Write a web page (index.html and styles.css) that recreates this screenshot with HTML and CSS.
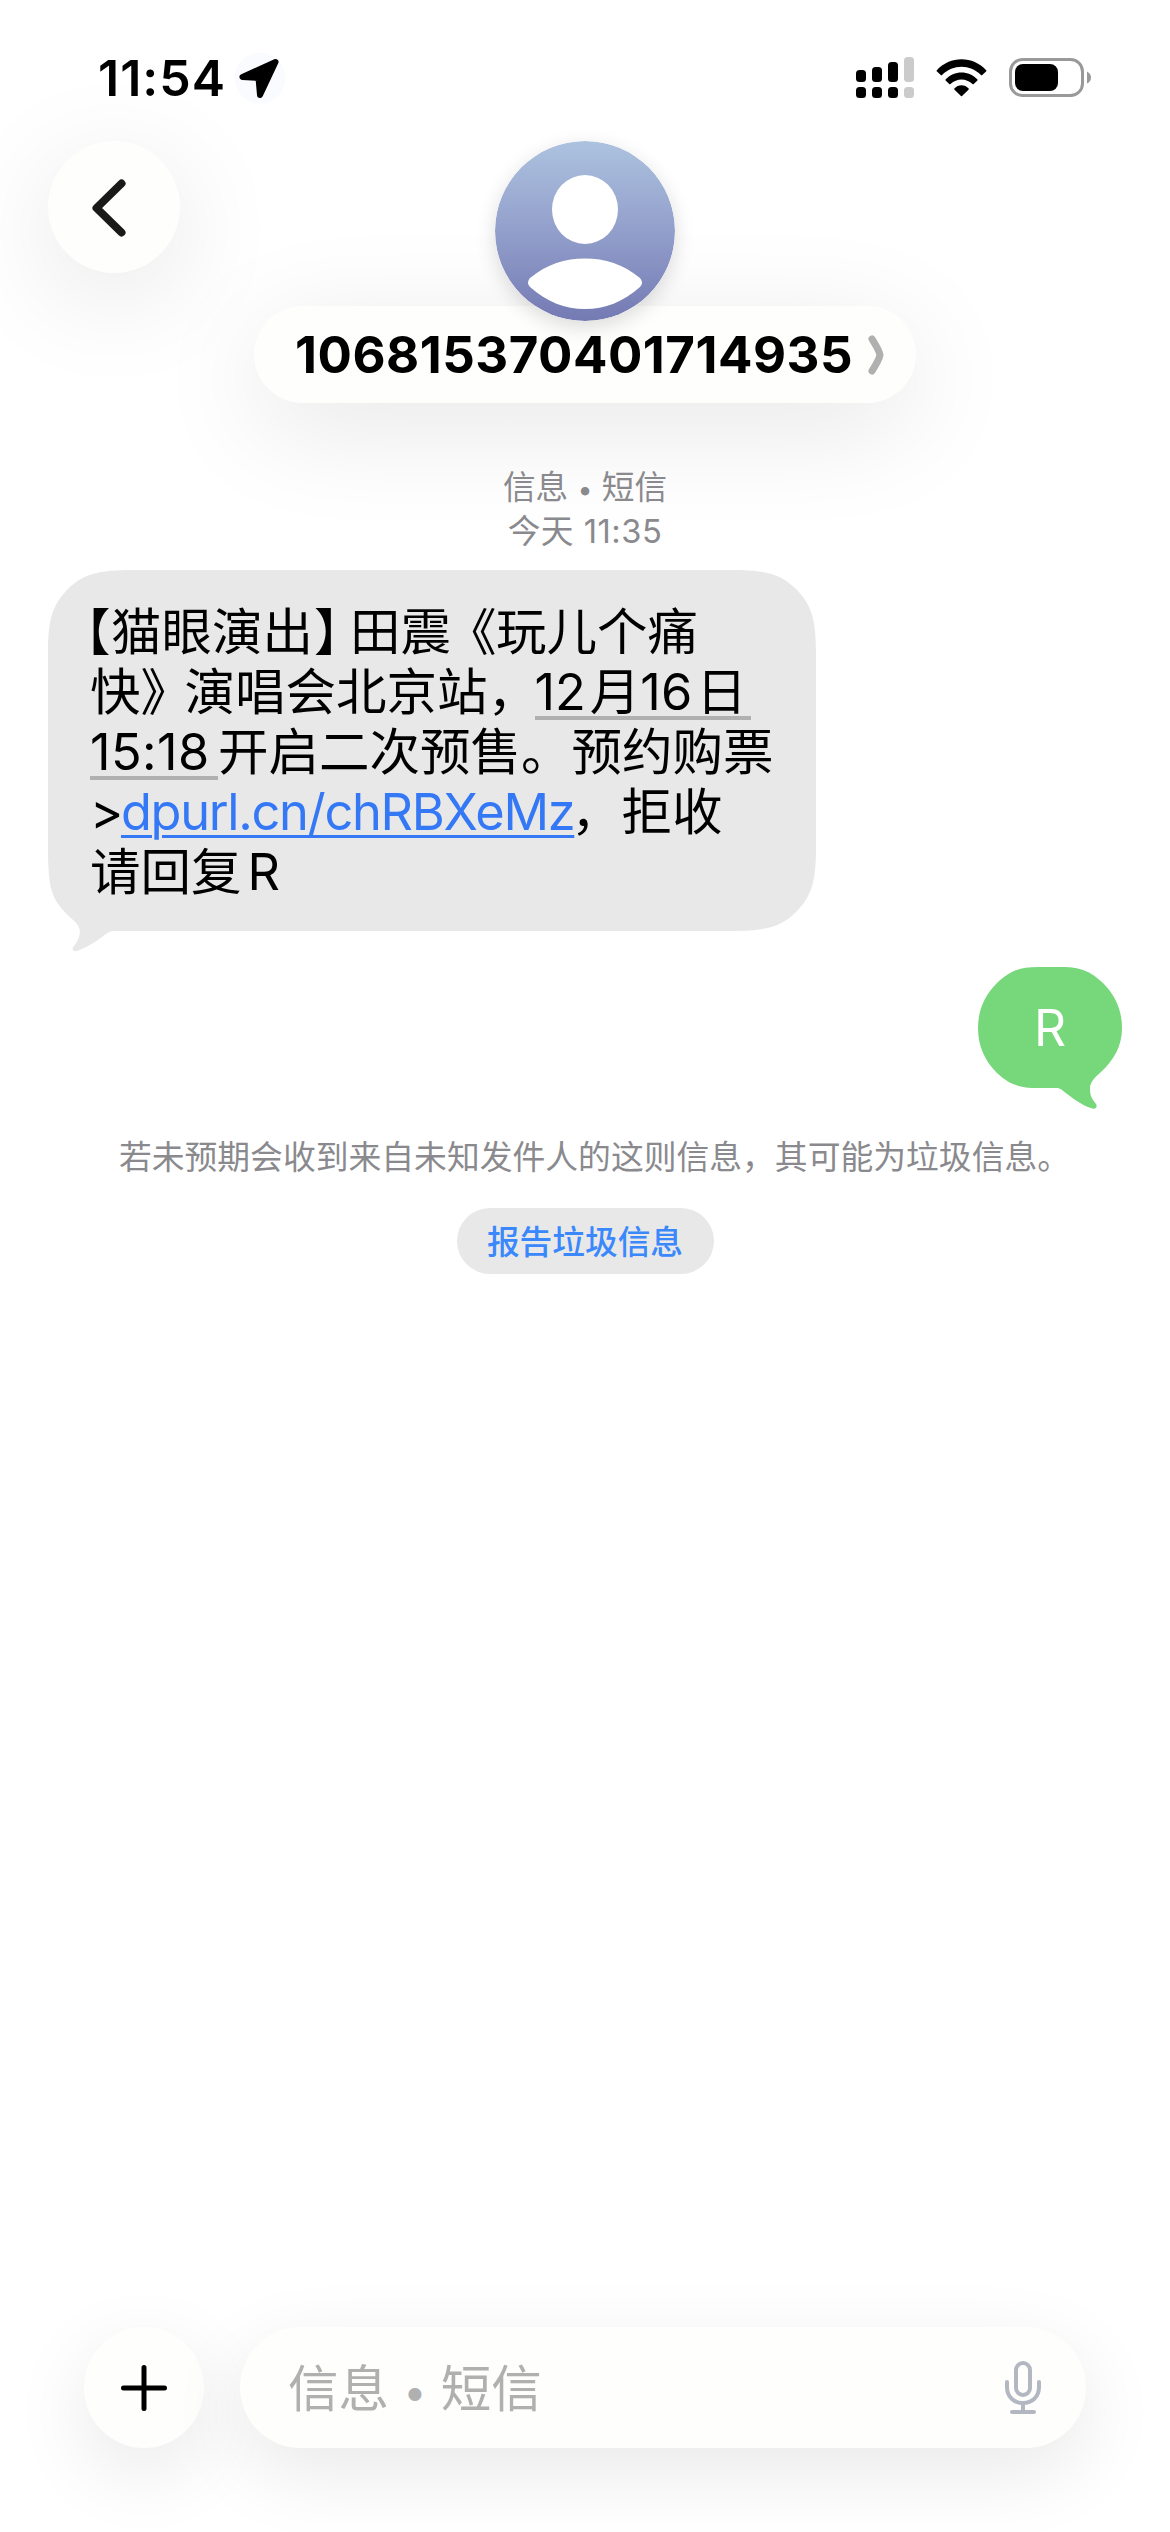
FILE: index.html
```html
<!DOCTYPE html>
<html lang="zh-CN">
<head>
<meta charset="utf-8">
<title>信息</title>
<link rel="stylesheet" href="styles.css">
</head>
<body>
<div class="phone">
  <header class="status">
    <div class="status-left">
      <span class="time">11:54</span>
      <svg class="location" width="52" height="52" viewBox="0 0 52 52"><circle cx="26" cy="26" r="25.500" fill="#fafbff"/><path d="M41.500 10 L8.500 25 L24.500 26 L26 43 Z" fill="#000" stroke="#000" stroke-width="6" stroke-linejoin="round"/></svg>
    </div>
    <div class="status-right">
      <svg width="59" height="42" viewBox="0 0 59 42">
        <g fill="#000"><rect y="13" width="10" height="12" rx="3.500"/><rect x="16" y="10" width="10" height="15" rx="3.500"/><rect x="32" y="5" width="10" height="20" rx="3.500"/><rect y="30" width="10" height="11" rx="3.500"/><rect x="16" y="30" width="10" height="11" rx="3.500"/><rect x="32" y="30" width="10" height="11" rx="3.500"/></g>
        <g fill="#cbcbcb"><rect x="48" width="10" height="25" rx="3.500"/><rect x="48" y="30" width="10" height="11" rx="3.500"/></g>
      </svg>
      <svg class="wifi" width="51" height="38" viewBox="0 0 51 38">
        <path d="M0.600 11.500 C14 -3.500 37 -3.500 50.400 11.500 Q50.600 12 50 12.600 L46 16.300 Q45.500 16.600 45 16 C34 5 17 5 6 16 Q5.500 16.600 5 16.300 L1 12.600 Q.4 12 .6 11.500Z"/>
        <path d="M9.500 20.600 C18 11 33 11 41.500 20.600 Q41.700 21 41.400 21.500 L37.500 25.200 Q37 25.500 36.500 25 C30 19 21 19 14.500 25 Q14 25.500 13.500 25.200 L9.600 21.500 Q9.300 21 9.500 20.600Z"/>
        <path d="M18.300 29.500 C22 25 29 25 32.700 29.500 Q33 30 32.500 30.700 L26 37 Q25.500 37.500 25 37 L18.500 30.700 Q18 30 18.300 29.500Z"/>
      </svg>
      <svg width="84" height="40" viewBox="0 0 84 40"><rect x="1.500" y="1.500" width="72" height="36" rx="12" fill="none" stroke="#999" stroke-width="3"/><rect x="6" y="6" width="43" height="27" rx="8" fill="#000"/><path d="M78 13.500 Q82 15.500 82 19.500 Q82 23.500 78 25.500Z" fill="#999"/></svg>
    </div>
  </header>

  <nav class="nav">
    <button class="back" aria-label="返回"><svg width="34" height="58" viewBox="0 0 34 58"><path d="M29.500 4.500 L4.500 29 L29.500 53.500" fill="none" stroke="#1a1a1a" stroke-width="8" stroke-linecap="round" stroke-linejoin="round"/></svg></button>
    <div class="contact">
      <svg class="avatar" width="180" height="180" viewBox="0 0 180 180">
        <defs><linearGradient id="av" x1="0" y1="0" x2="0" y2="1"><stop offset="0" stop-color="#adc2df"/><stop offset=".5" stop-color="#929fcb"/><stop offset="1" stop-color="#747ab3"/></linearGradient></defs>
        <circle cx="90" cy="90" r="90" fill="url(#av)"/>
        <ellipse cx="90" cy="68.500" rx="33" ry="34.500" fill="#fff"/>
        <path d="M35 137 C52 123 70 117.500 90 117.500 C110 117.500 128 123 145 137 Q149 141.500 145 146 C128 161 110 168 90 168 C70 168 52 161 35 146 Q31 141.500 35 137Z" fill="#fff"/>
      </svg>
      <div class="name"><span class="number">106815370401714935</span><svg width="16" height="40" viewBox="0 0 16 40"><path d="M4 4 Q11 15 12 20 Q11 25 4 36" fill="none" stroke="#b0b0b0" stroke-width="7" stroke-linecap="round" stroke-linejoin="round"/></svg></div>
    </div>
  </nav>

  <main class="thread">
    <div class="stamp"><div>信息 <span class="bullet">•</span> 短信</div><div class="when">今天 11:35</div></div>

    <div class="incoming">
      <svg class="shape" width="768" height="382" viewBox="0 0 768 382"><path fill="#e8e8e8" d="M85 0 H683 C718 0 733 4 748 19 C764 35 768 50 768 84 V277 C768 311 764 326 748 342 C733 357 718 361 683 361 H66 C61 361 58 364 54 367 C47 372 38 378 29 381 C25 382 23 379 26 376 C32 368 34 361 29 354 C25 349 21 347 15 340 C3 327 0 315 0 277 V84 C0 50 4 35 20 19 C35 4 50 0 85 0Z"/></svg>
      <div class="line"><span class="open">【</span><span class="w4">猫眼演出</span><span class="close-lent">】</span>田震<span class="open-book">《</span>玩儿个痛</div>
      <div class="line">快<span class="close-book">》</span>演唱会北京站<span class="comma">，</span><span class="date date-day">12<span class="month">月</span>16<span class="day">日</span></span></div>
      <div class="line"><span class="date date-time">15:18</span>开启二次预售。预约购票</div>
      <div class="line"><span class="gt">&gt;</span><a class="link">dpurl.cn/chRBXeMz</a>，拒收</div>
      <div class="line">请回复<span class="r">R</span></div>
    </div>

    <div class="outgoing">
      <svg class="shape" width="144" height="143" viewBox="0 0 144 143"><path fill="#76d87a" d="M60 0 H84 C104 0 113 5 125 16 C138 29 144 44 144 61 C144 79 136 93 123 105 C116 111 112 115 112 122 C112 130 115 133 118 137 C120 140 117 143 113 141 C103 138 93 130 84 123 C82 121.500 81 121 77 121 H60 C40 121 31 117 19 106 C6 93 0 78 0 61 C0 44 6 29 19 16 C31 5 40 0 60 0Z"/></svg>
      <span>R</span>
    </div>

    <p class="notice">若未预期会收到来自未知发件人的这则信息，其可能为垃圾信息。</p>
    <button class="report">报告垃圾信息</button>
  </main>

  <footer class="composer">
    <button class="plus" aria-label="添加"><svg width="46" height="46" viewBox="0 0 46 46"><path d="M23 2.500V43.500M2.500 23H43.500" stroke="#000" stroke-width="5" stroke-linecap="round"/></svg></button>
    <div class="field"><span class="placeholder">信息 <span class="bullet">•</span> 短信</span>
      <svg width="36" height="54" viewBox="0 0 36 54" fill="none" stroke="#b3b7c1" stroke-width="4" stroke-linecap="round"><rect x="11" y="2" width="14" height="32" rx="7"/><path d="M2 21V26C2 36 9 42 18 42C27 42 34 36 34 26V21M18 42V51M7 51H29"/></svg>
    </div>
  </footer>
</div>
</body>
</html>
```
FILE: styles.css
```css
* { box-sizing: border-box; }
body { margin: 0; background: #fff; }
button { border: 0; padding: 0; margin: 0; font: inherit; }
svg { display: block; flex: none; }

.phone {
  width: 1170px;
  height: 2532px;
  display: flex;
  flex-direction: column;
  overflow: hidden;
  background: #fff;
  color: #000;
  font-family: Inter, "Noto Sans CJK SC", sans-serif;
  text-spacing-trim: space-all;
}

.status {
  height: 141px;
  padding: 52px 77px 0 98px;
  display: flex;
  justify-content: space-between;
  align-items: flex-start;
}
.status-left { display: flex; align-items: center; gap: 11px; }
.time { width: 125px; font-size: 50px; line-height: 52px; font-weight: 600; letter-spacing: 1px; white-space: nowrap; }
.status-right { display: flex; align-items: flex-start; gap: 22px; padding-top: 5px; }
.wifi { margin: 2px 0 0 -1px; }
.status-right svg:last-child { margin-top: 1px; }

.nav { height: 328px; padding: 0 48px; display: grid; grid-template-columns: 132px 1fr 132px; }
.back {
  width: 132px;
  height: 132px;
  border-radius: 50%;
  background: #fefefd;
  box-shadow: 0 24px 110px rgba(0, 0, 0, .1);
  display: flex;
  align-items: center;
  justify-content: center;
  padding: 2px 10px 0 0;
}
.contact { display: flex; flex-direction: column; align-items: center; }
.avatar { position: relative; z-index: 1; border-radius: 50%; box-shadow: 0 6px 20px rgba(0, 0, 0, .14); }
.name {
  width: 662px;
  height: 97px;
  margin-top: -15px;
  padding: 0 32px 0 41px;
  border-radius: 49px;
  background: #fefefd;
  box-shadow: 0 24px 110px rgba(0, 0, 0, .1);
  display: flex;
  align-items: center;
  justify-content: space-between;
}
.number { font-size: 51px; font-weight: 700; letter-spacing: .5px; white-space: nowrap; }

.thread { display: flex; flex-direction: column; padding: 0 48px; position: relative; }
.stamp { font-size: 32.700px; line-height: 42px; text-align: center; color: #8a8a8e; height: 104px; margin-top: -3px; }
.when { letter-spacing: .5px; }
.bullet { display: inline-block; font-size: .82em; }

.line { height: 60px; line-height: 60px; font-size: 50.500px; white-space: nowrap; }
.incoming { position: relative; width: 768px; height: 361px; padding: 32px 0 0 42px; }
.shape { position: absolute; left: 0; top: 0; }
.incoming .line, .outgoing span { position: relative; }
.line span { display: inline-block; }
.open { width: 21px; text-indent: -30px; }
.w4 { width: 203px; }
.close-lent { width: 36px; }
.open-book { width: 45px; text-indent: -5px; }
.close-book { width: 44px; }
.comma { width: 47px; }
.line .date { height: 60px; line-height: 60px; background: linear-gradient(#b0b0b0, #b0b0b0) 0 54px / 100% 4px no-repeat; }
.date-day { width: 216px; letter-spacing: 0; }
.month { margin-left: 4px; }
.day { margin-left: 4px; }
.date-time { width: 128px; letter-spacing: .4px; }
.gt { width: 31px; }
.link {
  display: inline-block;
  width: 450px;
  color: #3478f6;
  letter-spacing: -1.300px;
  text-decoration: underline;
  text-decoration-thickness: 3px;
  text-underline-offset: 5px;
}
.r { margin-left: 6px; }

.outgoing {
  position: relative;
  align-self: flex-end;
  width: 144px;
  height: 121px;
  margin-top: 36px;
  padding-top: 1px;
  display: flex;
  align-items: center;
  justify-content: center;
  color: #fff;
  font-size: 50px;
}

.notice { margin: 46px 0 0; padding-left: 19px; text-align: center; font-size: 32.800px; line-height: 46px; color: #8a8a8e; white-space: nowrap; }
.report {
  align-self: center;
  margin-top: 28px;
  width: 257px;
  height: 66px;
  padding-bottom: 3px;
  border-radius: 33px;
  background: #e8e8e8;
  color: #3a88fc;
  font-size: 32.700px;
  font-weight: 500;
}

.composer { margin-top: auto; padding: 0 84px 84px; display: flex; justify-content: space-between; }
.plus {
  width: 120px;
  height: 121px;
  border-radius: 50%;
  background: #fefefd;
  box-shadow: 0 24px 80px rgba(0, 0, 0, .09);
  display: flex;
  align-items: center;
  justify-content: center;
}
.field {
  width: 846px;
  height: 121px;
  border-radius: 61px;
  background: #fefefd;
  box-shadow: 0 24px 80px rgba(0, 0, 0, .09);
  display: flex;
  align-items: center;
  justify-content: space-between;
  padding: 0 45px 0 48px;
  color: #b0b0b0;
  font-size: 50.500px;
}
.placeholder { padding-bottom: 5px; white-space: nowrap; }
```
